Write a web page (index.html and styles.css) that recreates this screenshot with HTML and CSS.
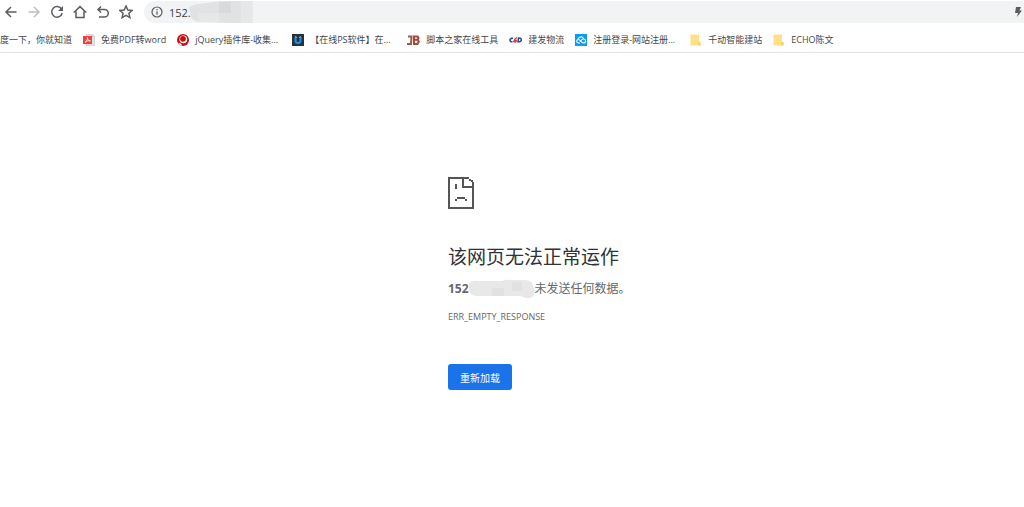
FILE: index.html
```html
<!DOCTYPE html>
<html lang="zh-CN">
<head>
<meta charset="utf-8">
<title>该网页无法正常运作</title>
<link rel="stylesheet" href="styles.css">
</head>
<body>
<header>
<nav class="toolbar" aria-label="导航">
<button class="tool" aria-label="后退"><svg viewBox="0 0 14 14"><path d="M12.5 7H2M7 2L2 7l5 5"/></svg></button>
<button class="tool tool-off" aria-label="前进" disabled><svg viewBox="0 0 14 14"><path d="M1.500 7H12M7 2l5 5-5 5"/></svg></button>
<button class="tool" aria-label="刷新"><svg viewBox="0 0 14 14"><path d="M11.600 4.200A5.300 5.300 0 1 0 12.200 8"/><path class="solid" d="M13 1v5H8z"/></svg></button>
<button class="tool" aria-label="主页"><svg viewBox="0 0 14 14"><path d="M.8 7.500L7 1.600l6.200 5.900M3 6.500v6h8v-6"/></svg></button>
<button class="tool" aria-label="撤销"><svg viewBox="0 0 14 14"><path d="M5 1.500L2 4.500l3 3M2 4.500h6.500a3.700 3.700 0 0 1 0 7.500H3"/></svg></button>
<button class="tool" aria-label="收藏"><svg viewBox="0 0 14 14"><path d="M7 1l1.800 4 4.400.4-3.300 2.900 1 4.300L7 10.300l-3.900 2.300 1-4.300L.8 5.400 5.200 5z"/></svg></button>
<div class="address">
<svg class="info" viewBox="0 0 12 12"><circle cx="6" cy="6" r="5"/><path d="M6 5.300v3.500M6 3v1.300"/></svg>
<input class="url" type="text" value="152." aria-label="网址">
<svg class="mask-url" viewBox="0 0 65 22" preserveAspectRatio="none"><path fill="#e0e2e4" d="M1 7Q4 3 12 3L34 0h31v22H42l-27-1Q4 21 3 15z"/><path fill="#d8dadd" d="M31 1h12v11H31z"/><path fill="#e5e7e9" d="M10 12h21v9H12zM53 0h12v22H53z"/></svg>
<svg class="bolt" viewBox="0 0 8 12"><path d="M2 1h5L5.500 4.500H8L3 11l1-4H1z"/></svg>
</div>
</nav>
<nav class="bookmarks" aria-label="书签">
<a class="mark" href="#">度一下，你就知道</a>
<a class="mark" href="#"><svg class="icon" viewBox="0 0 12 12"><path fill="#e2e2e2" stroke="#bbb" stroke-width=".5" d="M3 .3h6l2.700 2.700v8.700H3z"/><path fill="#ccc" d="M9 0v3h3z"/><path fill="#f04040" d="M0 2h9v8H0z"/><path fill="none" stroke="#fff" stroke-width=".8" d="M2 8.500C4 7 4.800 5 4.400 3.400 4.300 6 6 7 7.500 6.800 5 6.500 3.500 7 2 8.500"/></svg>免费PDF转word</a>
<a class="mark mark-long" href="#"><svg class="icon" viewBox="0 0 12 12"><circle cx="6" cy="6" r="6" fill="#c50d12"/><circle cx="6.300" cy="5.300" r="3.900" fill="#fff"/><circle cx="6" cy="4.800" r="2.900" fill="#c50d12"/><path fill="#fff" d="M1 9l3 .5 1 2-2-.3z"/></svg>jQuery插件库-收集...</a>
<a class="mark mark-long" href="#"><svg class="icon" viewBox="0 0 12 12"><path fill="#26333d" d="M0 0h12v12H0z"/><path fill="none" stroke="#248be8" stroke-width="2" d="M3.500 3v3.500a2.500 2.500 0 0 0 5 0V3"/><path stroke="#8cc4f2" d="M3 2.500l2 1M9 2.500l-2 1"/></svg>【在线PS软件】在...</a>
<a class="mark" href="#"><svg class="icon icon-wide" viewBox="0 0 13 12"><path fill="none" stroke="#9a5b4a" stroke-width="2" d="M1 2.500h3.500L4 10H0"/><path fill="none" stroke="#a8483a" stroke-width="2" d="M6 2.500h4.500l1 1.300-1 1.900H7h3.800l1 1.800-1.300 2.500H6M7 2v8"/></svg>脚本之家在线工具</a>
<a class="mark" href="#"><svg class="icon icon-wide" viewBox="0 0 13 12"><path fill="none" stroke="#234b9b" stroke-width="1.500" d="M4 4.300H2.500L1 5.300v1.500l1 1h1.500M9.500 4L9 7.800h1.700l1.500-1.200V5l-.8-.8z"/><path fill="none" stroke="#e13b42" stroke-width="1.300" d="M8 3.500L5.500 5.300 7.500 8M7.800 5.800L6 8.200 4.600 7.500 6 5.500"/></svg>建发物流</a>
<a class="mark mark-long" href="#"><svg class="icon" viewBox="0 0 12 12"><path fill="#0a9bf5" d="M0 0h12v12H0z"/><path fill="none" stroke="#fff" stroke-width="1.100" d="M3 5A3 3 0 0 1 8.500 4.500M5 9H3.500C1 8.500 1.200 5.500 3.500 5.500 5.500 5.500 6 9 8.500 9c2.700 0 2.700-4 0-4C7 5 6.500 6 5 7.500"/></svg>注册登录-网站注册...</a>
<a class="mark" href="#"><svg class="icon" viewBox="0 0 12 12"><path fill="#ffe08a" d="M.5 .5h8.500v7l1.500 1v3H.5z"/><path fill="#fbd266" d="M9 7.500l1.500 1v3H8V9z"/></svg>千动智能建站</a>
<a class="mark" href="#"><svg class="icon" viewBox="0 0 12 12"><path fill="#ffe08a" d="M.5 .5h8.500v7l1.500 1v3H.5z"/><path fill="#fbd266" d="M9 7.500l1.500 1v3H8V9z"/></svg>ECHO陈文</a>
</nav>
</header>
<main class="error">
<svg class="sad" viewBox="0 0 26 32" shape-rendering="crispEdges"><path fill="#555" d="M0 0h21v2H2v28h22V11H14V2h2v7h8V5h2v27H0zM21 2h2v2h-2zM23 3h2v2h-2zM7 7h2v5H7zM9 20h8v2H9zM7 22h2v2H7zM17 22h2v2h-2z"/></svg>
<h1 class="title">该网页无法正常运作</h1>
<p class="summary"><strong>152</strong><svg class="mask-host" viewBox="0 0 66 20"><path fill="#e8e8e9" d="M-1 5Q3 1 9 2h24Q37 0 43 1h12q9 0 9 6 4 7-1 11-5 3-11-1H8Q-1 17-1 5z"/><path fill="#e1e1e3" d="M43 3h10v9H43zM23 9h12v8H23z"/></svg>未发送任何数据。</p>
<p class="code">ERR_EMPTY_RESPONSE</p>
<button class="reload">重新加载</button>
</main>
</body>
</html>
```

FILE: styles.css
```css
* {
  box-sizing: border-box;
}

body {
  margin: 0;
  background: #fff;
  color: #55585c;
  font-family: "Open Sans", "Noto Sans CJK SC", sans-serif;
}

button {
  border: 0;
  font-family: inherit;
}

.toolbar {
  display: flex;
  align-items: center;
  gap: 9px;
  height: 24px;
  padding-left: 4px;
}

.tool {
  flex: none;
  width: 14px;
  height: 14px;
  padding: 0;
  background: none;
}

.tool svg {
  display: block;
  fill: none;
  stroke: #5a5d61;
  stroke-width: 1.5;
}

.tool .solid {
  fill: #5a5d61;
  stroke: none;
}

.tool-off svg {
  stroke: #bdbfc1;
}

.address {
  display: flex;
  flex: 1;
  align-items: center;
  height: 22px;
  margin-left: 2px;
  padding: 0 2px 0 7px;
  border-radius: 11px 0 0 11px;
  background: #f1f3f4;
}

.info {
  flex: none;
  width: 12px;
  fill: none;
  stroke: #5a5d61;
  stroke-width: 1.2;
}

.url {
  width: 24px;
  margin-left: 6px;
  padding: 0;
  border: 0;
  background: none;
  color: #3c4043;
  font-family: inherit;
  font-size: 11px;
}

.mask-url {
  width: 65px;
  height: 22px;
  margin-left: -5px;
}

.bolt {
  width: 8px;
  height: 12px;
  margin-left: auto;
  fill: #5a5d61;
}

.bookmarks {
  display: flex;
  align-items: center;
  gap: 11px;
  height: 29px;
  padding-top: 4px;
  border-bottom: 1px solid #e2e3e5;
  overflow: hidden;
}

.mark {
  display: flex;
  flex: none;
  align-items: center;
  gap: 6px;
  color: #45484c;
  font-size: 9px;
  line-height: 16px;
  text-decoration: none;
  white-space: nowrap;
}

.mark-long {
  width: 104px;
}

.icon {
  flex: none;
  width: 12px;
  height: 12px;
}

.icon-wide {
  width: 13px;
}

.error {
  display: flex;
  flex-direction: column;
  align-items: flex-start;
  margin-top: 124px;
  padding-left: 43.75%;
}

.sad {
  width: 26px;
  height: 32px;
}

.title {
  margin: 34px 0 0;
  color: #303236;
  font-size: 19px;
  font-weight: 400;
  line-height: 28px;
  white-space: nowrap;
}

.summary {
  display: flex;
  align-items: center;
  margin: 8px 0 0;
  color: #65686c;
  font-size: 12px;
  line-height: 20px;
  white-space: nowrap;
}

.mask-host {
  width: 66px;
  height: 20px;
}

.code {
  margin: 10px 0 0;
  color: #65686c;
  font-size: 9px;
  line-height: 16px;
}

.reload {
  height: 26px;
  margin-top: 39px;
  padding: 0 12px;
  border-radius: 3px;
  background: #1a73e8;
  color: #fff;
  font-size: 10px;
}
```
